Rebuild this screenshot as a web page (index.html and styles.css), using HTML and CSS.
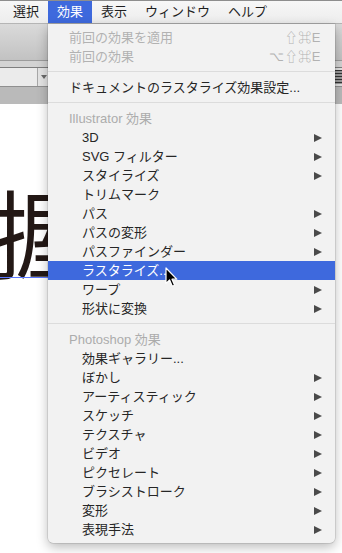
FILE: index.html
```html
<!DOCTYPE html>
<html lang="ja">
<head>
<meta charset="utf-8">
<link rel="stylesheet" href="styles.css">
</head>
<body>
<div class="screen">
  <div class="menubar">
    <span class="mb-item first">選択</span>
    <span class="mb-item active">効果</span>
    <span class="mb-item">表示</span>
    <span class="mb-item">ウィンドウ</span>
    <span class="mb-item">ヘルプ</span>
  </div>
  <div class="workspace">
    <div class="tb1"></div>
    <div class="tb2"></div>
    <div class="tb3">
      <div class="combo"></div>
      <div class="combo-btn"><span class="combo-arrow"></span></div>
      <div class="tb3-fill"></div>
      <div class="lines-icon"></div>
    </div>
    <div class="tb4"></div>
    <div class="canvas">
      <span class="glyph">握</span>
      <div class="guide"></div>
    </div>
  </div>

  <div class="menu">
    <div class="mi disabled"><span class="label">前回の効果を適用</span><span class="sc">⇧⌘E</span></div>
    <div class="mi disabled"><span class="label">前回の効果</span><span class="sc">⌥⇧⌘E</span></div>
    <div class="sep"></div>
    <div class="mi"><span class="label">ドキュメントのラスタライズ効果設定...</span></div>
    <div class="sep"></div>
    <div class="mh">Illustrator 効果</div>
    <div class="mi sub"><span class="label">3D</span><span class="arr"></span></div>
    <div class="mi sub"><span class="label">SVG フィルター</span><span class="arr"></span></div>
    <div class="mi sub"><span class="label">スタイライズ</span><span class="arr"></span></div>
    <div class="mi sub"><span class="label">トリムマーク</span></div>
    <div class="mi sub"><span class="label">パス</span><span class="arr"></span></div>
    <div class="mi sub"><span class="label">パスの変形</span><span class="arr"></span></div>
    <div class="mi sub"><span class="label">パスファインダー</span><span class="arr"></span></div>
    <div class="mi sub hl"><span class="label">ラスタライズ...</span></div>
    <div class="mi sub"><span class="label">ワープ</span><span class="arr"></span></div>
    <div class="mi sub"><span class="label">形状に変換</span><span class="arr"></span></div>
    <div class="sep"></div>
    <div class="mh">Photoshop 効果</div>
    <div class="mi sub"><span class="label">効果ギャラリー...</span></div>
    <div class="mi sub"><span class="label">ぼかし</span><span class="arr"></span></div>
    <div class="mi sub"><span class="label">アーティスティック</span><span class="arr"></span></div>
    <div class="mi sub"><span class="label">スケッチ</span><span class="arr"></span></div>
    <div class="mi sub"><span class="label">テクスチャ</span><span class="arr"></span></div>
    <div class="mi sub"><span class="label">ビデオ</span><span class="arr"></span></div>
    <div class="mi sub"><span class="label">ピクセレート</span><span class="arr"></span></div>
    <div class="mi sub"><span class="label">ブラシストローク</span><span class="arr"></span></div>
    <div class="mi sub"><span class="label">変形</span><span class="arr"></span></div>
    <div class="mi sub"><span class="label">表現手法</span><span class="arr"></span></div>
  </div>

  <svg class="cursor" width="13" height="21" viewBox="0 0 13 21">
    <path d="M1 1 L1 16.5 L4.6 13 L7.3 19.2 L9.6 18.2 L7 12.2 L11.8 12.2 Z" fill="#000" stroke="#fff" stroke-width="1.2" stroke-linejoin="round"/>
  </svg>
</div>
</body>
</html>
```

FILE: styles.css
```css
html, body {
  margin: 0;
  padding: 0;
  background: #ffffff;
}

.screen {
  position: relative;
  width: 342px;
  height: 553px;
  overflow: hidden;
  font-family: "Liberation Sans", "Noto Sans CJK JP", sans-serif;
  font-size: 13px;
  color: #262626;
}

/* ---------- menu bar ---------- */
.menubar {
  display: flex;
  height: 24px;
  box-sizing: border-box;
  border-top: 1px solid #8e8e8e;
  background: linear-gradient(#f7f7f7, #ededed);
  border-bottom: 1px solid #b5b5b5;
}

.mb-item {
  padding: 0 9px;
  line-height: 22px;
  color: #1e1e1e;
}

.mb-item.first {
  margin-left: 4px;
}

.mb-item.active {
  background: #3e69dd;
  color: #ffffff;
}

/* ---------- workspace ---------- */
.workspace {
  display: flex;
  flex-direction: column;
}

.tb1 {
  height: 36px;
  background: linear-gradient(#dadada, #c2c2c2);
  border-bottom: 1px solid #9b9b9b;
}

.tb2 {
  height: 6px;
  background: #d3d3d3;
  border-bottom: 1px solid #7e7e7e;
}

.tb3 {
  display: flex;
  height: 18px;
  background: #e2e2e2;
  border-bottom: 1px solid #8f8f8f;
}

.combo {
  width: 37px;
  background: #ebebeb;
  border-right: 1px solid #a8a8a8;
}

.combo-btn {
  width: 12px;
  display: flex;
  align-items: center;
  justify-content: center;
  background: #e4e4e4;
}

.combo-arrow {
  width: 0;
  height: 0;
  border-left: 3px solid transparent;
  border-right: 3px solid transparent;
  border-top: 4px solid #6a6a6a;
}

.tb3-fill {
  flex: 1;
}

.lines-icon {
  width: 7px;
  margin: 2px 0;
  background: repeating-linear-gradient(#333 0 1px, #9a9a9a 1px 3px);
}

.tb4 {
  height: 17px;
  background: #bababa;
}

.canvas {
  position: relative;
  height: 460px;
  background: #ffffff;
}

.glyph {
  position: absolute;
  left: -9px;
  top: 78px;
  font-family: "Noto Sans CJK JP", sans-serif;
  font-size: 96px;
  line-height: 96px;
  color: #231815;
}

.guide {
  position: absolute;
  left: 0;
  top: 173px;
  width: 60px;
  height: 1px;
  background: #5b78ff;
}

/* ---------- dropdown menu ---------- */
.menu {
  position: absolute;
  left: 48px;
  top: 24px;
  width: 287px;
  box-sizing: border-box;
  padding: 4px 0 4px;
  background: #f2f2f2;
  border-radius: 0 0 5px 5px;
  box-shadow: 0 0 0 0.5px rgba(0, 0, 0, 0.18), 0 4px 12px rgba(0, 0, 0, 0.28);
}

.mi {
  display: flex;
  align-items: center;
  height: 19px;
  padding: 0 13px 0 21px;
  line-height: 19px;
  color: #262626;
}

.mi.sub {
  padding-left: 34px;
}

.mi .label {
  flex: 1;
  white-space: nowrap;
}

.mi.disabled {
  color: #b2b2b2;
}

.sc {
  color: #b2b2b2;
  letter-spacing: 0.5px;
  padding-right: 1px;
}

.mi.hl {
  background: #3e69dd;
  color: #ffffff;
}

.arr {
  width: 0;
  height: 0;
  border-left: 8px solid #4a4a4a;
  border-top: 4.5px solid transparent;
  border-bottom: 4.5px solid transparent;
}

.mh {
  height: 19px;
  line-height: 19px;
  padding-left: 21px;
  color: #acacac;
}

.sep {
  height: 1px;
  margin: 5px 0 6px;
  background: #dcdcdc;
}

.cursor {
  position: absolute;
  left: 165px;
  top: 267px;
}
```
